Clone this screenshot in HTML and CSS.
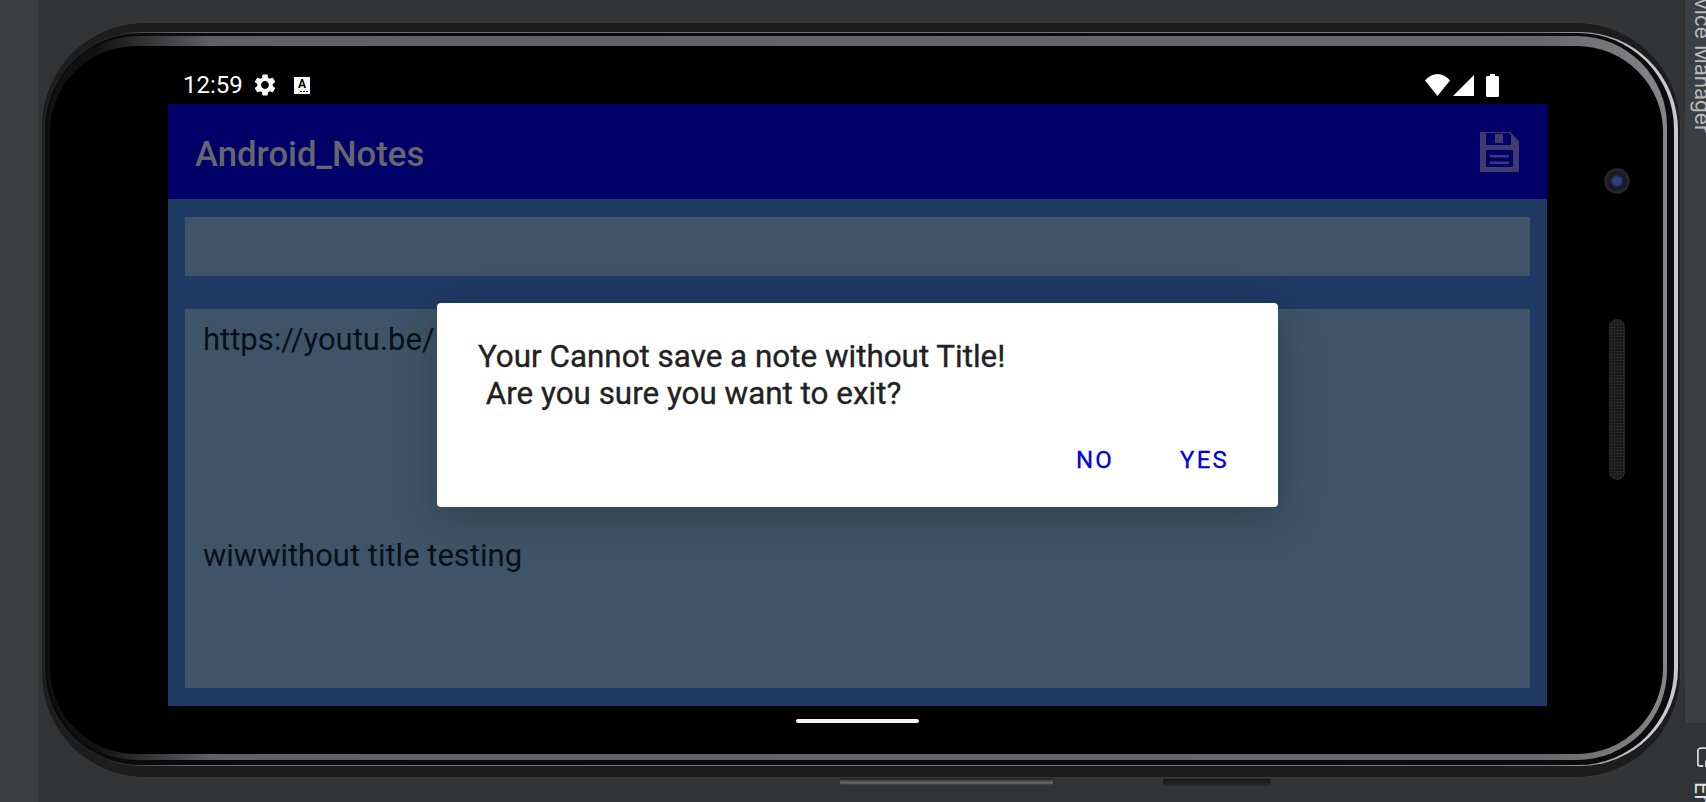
FILE: index.html
```html
<!DOCTYPE html>
<html lang="en">
<head>
    <meta charset="UTF-8">
    <title>Android_Notes | Emulator</title>
    <link rel="stylesheet" href="styles.css">
</head>
<body>
    <div class="left-strip"></div>

    <div class="stage">
        <div class="shell">
            <div class="rim">
                <div class="rim-gap">
                    <div class="glass-ring">
                        <div class="glass">
                            <div class="screen-col">
                                <div class="status-bar">
                                    <span class="clock">12:59</span>
                                    <svg class="gear" viewBox="0 0 24 24"><path d="M19.14 12.94c.04-.3.06-.61.06-.94 0-.32-.02-.64-.07-.94l2.03-1.58c.18-.14.23-.41.12-.61l-1.92-3.32c-.12-.22-.37-.29-.59-.22l-2.39.96c-.5-.38-1.03-.7-1.62-.94l-.36-2.54c-.04-.24-.24-.41-.48-.41h-3.84c-.24 0-.43.17-.47.41l-.36 2.54c-.59.24-1.13.57-1.62.94l-2.39-.96c-.22-.08-.47 0-.59.22L2.74 8.87c-.12.21-.08.47.12.61l2.03 1.58c-.05.3-.09.63-.09.94s.02.64.07.94l-2.03 1.58c-.18.14-.23.41-.12.61l1.92 3.32c.12.22.37.29.59.22l2.39-.96c.5.38 1.03.7 1.62.94l.36 2.54c.05.24.24.41.48.41h3.84c.24 0 .44-.17.47-.41l.36-2.54c.59-.24 1.13-.56 1.62-.94l2.39.96c.22.08.47 0 .59-.22l1.92-3.32c.12-.22.07-.47-.12-.61l-2.01-1.58zM12 15.6c-1.98 0-3.6-1.62-3.6-3.6s1.62-3.6 3.6-3.6 3.6 1.62 3.6 3.6-1.62 3.6-3.6 3.6z"/></svg>
                                    <span class="keyboard-badge">A<i class="badge-dots"></i></span>
                                    <div class="status-right">
                                        <svg class="wifi" viewBox="0 0 25 22"><path d="M0 6.5C3.5 2.2 7.8 0 12.5 0S21.5 2.2 25 6.5L12.5 22z"/></svg>
                                        <svg class="signal" viewBox="0 0 21 21"><path d="M21 0v21H0z"/></svg>
                                        <svg class="battery" viewBox="0 0 13 23"><path d="M4 0h5v2h2.500c.8 0 1.500.7 1.500 1.500V21.500c0 .8-.7 1.500-1.500 1.500h-10C.7 23 0 22.300 0 21.500V3.500C0 2.700.7 2 1.500 2H4z"/></svg>
                                    </div>
                                </div>

                                <div class="screen">
                                    <header class="app-bar">
                                        <h1>Android_Notes</h1>
                                        <svg class="save-icon" viewBox="0 0 39 40">
                                            <path fill-rule="evenodd" d="M1 0h29l9 9v30a1 1 0 0 1-1 1H1a1 1 0 0 1-1-1V1a1 1 0 0 1 1-1zM6 1v12h25V3l-2-2zM6 18v17h27V18z"/>
                                            <rect x="15" y="2" width="8" height="9"/>
                                            <rect x="10" y="23" width="19" height="2.500"/>
                                            <rect x="10" y="29.500" width="19" height="2.500"/>
                                        </svg>
                                    </header>

                                    <section class="note-form">
                                        <div class="field title-field"></div>
                                        <div class="field body-field">https://youtu.be/





wiwwithout title testing</div>
                                    </section>

                                    <div class="scrim">
                                        <div class="dialog">
                                            <p class="dialog-msg">Your Cannot save a note without Title!
 Are you sure you want to exit?</p>
                                            <div class="dialog-actions">
                                                <button>NO</button>
                                                <button>YES</button>
                                            </div>
                                        </div>
                                    </div>
                                </div>

                                <div class="nav-area"><div class="home-pill"></div></div>
                            </div>

                            <div class="sensors">
                                <div class="camera"></div>
                                <div class="speaker"></div>
                            </div>
                        </div>
                    </div>
                </div>
            </div>
        </div>

        <div class="side-buttons">
            <div class="power-btn"></div>
            <div class="volume-btn"></div>
        </div>
    </div>

    <div class="right-strip">
        <div class="tool-tab">
            <span class="tool-label">Device Manager</span>
        </div>
        <div class="tool-bottom">
            <svg class="emulator-icon" viewBox="0 0 18 24"><path d="M18 1H4C2.500 1 1 2.500 1 4v15c0 1.500 1.500 2 3 2h3M10 16h8v5h-8z" fill="none" stroke="#d6d6d6" stroke-width="2"/></svg>
            <span class="tool-label bright">Emulator</span>
        </div>
    </div>
</body>
</html>
```

FILE: styles.css
```css
/* Emulator window with a phone lying on its side */
* {
    box-sizing: border-box;
}

body {
    display: flex;
    width: 1706px;
    height: 802px;
    margin: 0;
    overflow: hidden;
    background-color: #313335;
    font-family: Roboto, "Liberation Sans", sans-serif;
}

.left-strip {
    flex: 0 0 38px;
    background-color: #3c3f41;
}

.stage {
    flex: 1;
    display: flex;
    flex-direction: column;
    padding: 22px 4px 0 3px;
}

/* Phone frame, nested rings. The light falls from the right */
.shell {
    height: 756px;
    padding: 9px 2px 11px 2px;
    border: 1px solid #3a3939;
    border-radius: 104px;
    background-color: #1d1d1e;
}

.rim {
    height: 100%;
    padding: 1px 4px 1px 1px;
    border-radius: 98px;
    background: linear-gradient(90deg, #2a2a2a 0, #2a2a2a 3%, #6c6c6e 9%, #7c7c7e 92%, #c8c8ca 98%);
}

.rim-gap {
    height: 100%;
    padding: 3px 7px 5px 3px;
    border-radius: 96px;
    background-color: #0b0b0c;
}

.glass-ring {
    height: 100%;
    padding: 10px 4px 6px 2px;
    border-radius: 90px;
    background: linear-gradient(90deg, #111 0, #111 3%, #606063 10%, #68686b 92%, #85858a 100%);
}

.glass {
    display: flex;
    height: 100%;
    border-radius: 86px;
    background-color: #000;
}

.screen-col {
    display: flex;
    flex-direction: column;
    flex: 0 0 1379px;
    margin-left: 118px;
}

/* Status bar */
.status-bar {
    display: flex;
    align-items: center;
    height: 58px;
    padding: 20px 48px 0 15px;
    color: #fff;
}

.clock {
    width: 58px;
    font-size: 24px;
    white-space: nowrap;
}

.gear {
    width: 26px;
    height: 26px;
    margin-left: 11px;
    fill: #fff;
}

.keyboard-badge {
    position: relative;
    width: 16px;
    height: 17px;
    margin-left: 16px;
    background-color: #fff;
    color: #000;
    font-size: 12px;
    font-weight: 700;
    line-height: 14px;
    text-align: center;
}

.badge-dots {
    position: absolute;
    right: 1px;
    bottom: 2px;
    width: 9px;
    height: 1px;
    background: repeating-linear-gradient(90deg, #000 0 2px, transparent 2px 3px);
}

.status-right {
    display: flex;
    align-items: center;
    margin-left: auto;
    fill: #fff;
}

.wifi {
    width: 25px;
    height: 22px;
}

.signal {
    width: 21px;
    height: 21px;
    margin-left: 3px;
}

.battery {
    width: 13px;
    height: 23px;
    margin-left: 12px;
}

/* App */
.screen {
    position: relative;
    display: flex;
    flex-direction: column;
    height: 602px;
    background-color: #1f3a64;
}

.app-bar {
    display: flex;
    align-items: center;
    justify-content: space-between;
    height: 95px;
    padding: 4px 28px 0 27px;
    background-color: #000068;
}

.app-bar h1 {
    margin: 0;
    color: #66666f;
    font-size: 34.700px;
    font-weight: 500;
}

.save-icon {
    width: 39px;
    height: 40px;
    margin-top: -4px;
    fill: #3f3a70;
}

.note-form {
    flex: 1;
    display: flex;
    flex-direction: column;
    gap: 33px;
    padding: 18px 17px 18px 17px;
}

.field {
    background-color: #3f5468;
    color: #081018;
    font-size: 31px;
    line-height: 36px;
}

.title-field {
    height: 59px;
}

.body-field {
    flex: 1;
    padding: 13px 18px;
    white-space: pre-wrap;
}

/* Dialog */
.scrim {
    position: absolute;
    inset: 0;
    display: flex;
    align-items: center;
    justify-content: center;
}

.dialog {
    width: 841px;
    height: 204px;
    padding: 35px 49px 0 41px;
    border-radius: 4px;
    background-color: #fff;
    box-shadow: 0 10px 40px rgba(0, 0, 0, 0.25);
}

.dialog-msg {
    margin: 0;
    color: #212121;
    font-size: 31.400px;
    line-height: 37px;
    white-space: pre-wrap;
    -webkit-text-stroke: 0.35px #212121;
}

.dialog-actions {
    display: flex;
    justify-content: flex-end;
    gap: 66px;
    margin-top: 34px;
}

.dialog-actions button {
    padding: 0;
    border: none;
    background: none;
    color: #0000dd;
    font-family: inherit;
    font-size: 24px;
    letter-spacing: 2.200px;
    -webkit-text-stroke: 0.3px #0000dd;
}

.nav-area {
    flex: 1;
    display: flex;
    justify-content: center;
    padding-top: 13px;
}

.home-pill {
    width: 123px;
    height: 4px;
    border-radius: 2px;
    background-color: #f4f4f4;
}

/* Camera and speaker */
.sensors {
    flex: 1;
    display: flex;
    flex-direction: column;
    align-items: center;
    gap: 125px;
    padding: 122px 0 0 24px;
}

.camera {
    width: 26px;
    height: 26px;
    border-radius: 50%;
    background: radial-gradient(circle at 50% 50%, #2f3d78 0 4px, #1b2140 6px, #17171c 8px, #2a2a2d 12px, #0c0c0c 13px);
}

.speaker {
    width: 16px;
    height: 161px;
    border: 1px solid #262626;
    border-radius: 8px;
    background: radial-gradient(circle, #3c3c3c 0 1px, #1c1c1c 1px) 0 0 / 3px 3px;
}

/* Buttons on the phone's edge */
.side-buttons {
    display: flex;
    align-items: flex-start;
    gap: 110px;
    padding-left: 799px;
}

.power-btn {
    width: 213px;
    height: 7px;
    border-radius: 2px;
    background: linear-gradient(#1c1c1c, #6a6a6a 70%, #303030);
}

.volume-btn {
    width: 108px;
    height: 7px;
    margin-top: 1px;
    border-radius: 2px;
    background: linear-gradient(#141414, #2c2c2c);
}

/* Right tool strip */
.right-strip {
    flex: 0 0 21px;
    display: flex;
    flex-direction: column;
    overflow: hidden;
}

.tool-tab {
    flex: 0 0 723px;
    display: flex;
    justify-content: flex-end;
    background-color: #3c3f41;
}

.tool-label {
    margin-right: -7px;
    color: #b8babc;
    font-family: Inter, "Liberation Sans", sans-serif;
    font-size: 21px;
    line-height: 21px;
    writing-mode: vertical-rl;
    white-space: nowrap;
}

.tool-tab .tool-label {
    height: 133px;
    direction: rtl;
}

.tool-bottom {
    flex: 1;
    display: flex;
    flex-direction: column;
    align-items: flex-end;
    gap: 12px;
    padding-top: 23px;
    overflow: hidden;
}

.emulator-icon {
    flex-shrink: 0;
    width: 16px;
    height: 24px;
    margin-right: -7px;
}

.tool-label.bright {
    color: #e0e0e0;
}
```
